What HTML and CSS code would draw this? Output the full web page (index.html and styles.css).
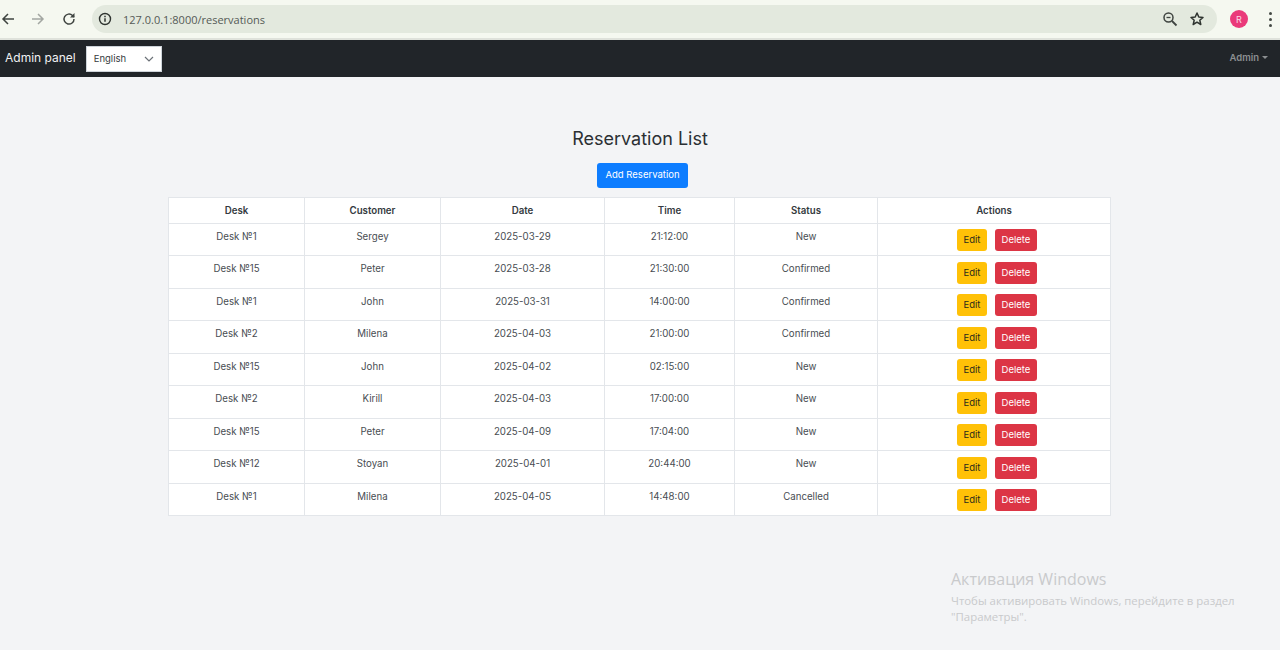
FILE: index.html
```html
<!DOCTYPE html>
<html lang="en">
<head>
<meta charset="UTF-8">
<meta name="viewport" content="width=device-width, initial-scale=1.0">
<title>Reservations</title>
<link rel="stylesheet" href="styles.css">
</head>
<body>
<div class="chrome">
    <svg class="chrome-icon" width="16" height="16" viewBox="0 0 16 16"><path d="M14 8H3M8 3L3 8l5 5" fill="none" stroke="#3f4440" stroke-width="1.5"/></svg>
    <svg class="chrome-icon forward" width="16" height="16" viewBox="0 0 16 16"><path d="M2 8h11M8 3l5 5-5 5" fill="none" stroke="#a3a7a2" stroke-width="1.5"/></svg>
    <svg class="chrome-icon reload" width="16" height="16" viewBox="0 0 16 16"><path d="M13 8a5 5 0 1 1-1.5-3.5L13 6" fill="none" stroke="#3f4440" stroke-width="1.5"/><path d="M13.500 2v4.500H9z" fill="#3f4440"/></svg>
    <div class="address">
        <svg width="16" height="16" viewBox="0 0 16 16"><circle cx="8" cy="8" r="5.500" fill="none" stroke="#2f3430" stroke-width="1.4"/><path d="M8 7.200v3.600M8 4.800v1.400" stroke="#2f3430" stroke-width="1.500"/></svg>
        <span class="url">127.0.0.1:8000/reservations</span>
        <svg class="zoom-icon" width="16" height="16" viewBox="0 0 16 16"><circle cx="6.500" cy="6.500" r="4.500" fill="none" stroke="#3f4440" stroke-width="1.500"/><path d="M10 10l4.500 4.500" stroke="#3f4440" stroke-width="1.800"/><path d="M4.500 6.500h4" stroke="#3f4440" stroke-width="1.300"/></svg>
        <svg class="star-icon" width="16" height="16" viewBox="0 0 16 16"><path d="M8 2l1.800 4 4.200.4-3.200 2.800 1 4.300L8 11.200l-3.800 2.300 1-4.300L2 6.400l4.200-.4z" fill="none" stroke="#2f3430" stroke-width="1.500" stroke-linejoin="round"/></svg>
    </div>
    <span class="avatar">R</span>
    <span class="chrome-menu"><i></i><i></i><i></i></span>
</div>

<nav class="navbar">
    <a class="brand">Admin panel</a>
    <div class="lang-select">
        <span>English</span>
        <svg width="10" height="6" viewBox="0 0 10 6"><path d="M1 1l4 4 4-4" fill="none" stroke="#6c7278" stroke-width="1.200"/></svg>
    </div>
    <a class="admin-link">Admin<i class="caret"></i></a>
</nav>

<main class="content">
    <h2>Reservation List</h2>
    <a class="btn btn-primary">Add Reservation</a>
    <table class="res-table">
        <colgroup>
            <col class="col-desk"><col class="col-customer"><col class="col-date">
            <col class="col-time"><col class="col-status"><col class="col-actions">
        </colgroup>
        <thead>
            <tr><th>Desk</th><th>Customer</th><th>Date</th><th>Time</th><th>Status</th><th>Actions</th></tr>
        </thead>
        <tbody>
            <tr><td>Desk №1</td><td>Sergey</td><td>2025-03-29</td><td>21:12:00</td><td>New</td><td class="actions"><a class="btn btn-sm btn-warning">Edit</a><a class="btn btn-sm btn-danger">Delete</a></td></tr>
            <tr><td>Desk №15</td><td>Peter</td><td>2025-03-28</td><td>21:30:00</td><td>Confirmed</td><td class="actions"><a class="btn btn-sm btn-warning">Edit</a><a class="btn btn-sm btn-danger">Delete</a></td></tr>
            <tr><td>Desk №1</td><td>John</td><td>2025-03-31</td><td>14:00:00</td><td>Confirmed</td><td class="actions"><a class="btn btn-sm btn-warning">Edit</a><a class="btn btn-sm btn-danger">Delete</a></td></tr>
            <tr><td>Desk №2</td><td>Milena</td><td>2025-04-03</td><td>21:00:00</td><td>Confirmed</td><td class="actions"><a class="btn btn-sm btn-warning">Edit</a><a class="btn btn-sm btn-danger">Delete</a></td></tr>
            <tr><td>Desk №15</td><td>John</td><td>2025-04-02</td><td>02:15:00</td><td>New</td><td class="actions"><a class="btn btn-sm btn-warning">Edit</a><a class="btn btn-sm btn-danger">Delete</a></td></tr>
            <tr><td>Desk №2</td><td>Kirill</td><td>2025-04-03</td><td>17:00:00</td><td>New</td><td class="actions"><a class="btn btn-sm btn-warning">Edit</a><a class="btn btn-sm btn-danger">Delete</a></td></tr>
            <tr><td>Desk №15</td><td>Peter</td><td>2025-04-09</td><td>17:04:00</td><td>New</td><td class="actions"><a class="btn btn-sm btn-warning">Edit</a><a class="btn btn-sm btn-danger">Delete</a></td></tr>
            <tr><td>Desk №12</td><td>Stoyan</td><td>2025-04-01</td><td>20:44:00</td><td>New</td><td class="actions"><a class="btn btn-sm btn-warning">Edit</a><a class="btn btn-sm btn-danger">Delete</a></td></tr>
            <tr><td>Desk №1</td><td>Milena</td><td>2025-04-05</td><td>14:48:00</td><td>Cancelled</td><td class="actions"><a class="btn btn-sm btn-warning">Edit</a><a class="btn btn-sm btn-danger">Delete</a></td></tr>
        </tbody>
    </table>
</main>

<div class="watermark">
    <div class="wm-title">Активация Windows</div>
    <div class="wm-text">Чтобы активировать Windows, перейдите в раздел<br>"Параметры".</div>
</div>
</body>
</html>
```

FILE: styles.css
```css
* {
    box-sizing: border-box;
}
html, body {
    height: 650px;
    overflow: hidden;
}
body {
    margin: 0;
    font-family: Inter, "Open Sans", sans-serif;
    background-color: #f3f4f6;
    color: #343a40;
    position: relative;
}

/* browser bar */
.chrome {
    height: 40px;
    display: flex;
    align-items: center;
    background-color: #f5f8f0;
    border-bottom: 2px solid #dfe2db;
}
.chrome-icon {
    flex: none;
}
.chrome-icon.forward {
    margin-left: 14px;
}
.chrome-icon.reload {
    margin-left: 15px;
}
.address {
    width: 1125px;
    height: 28px;
    margin-left: 15px;
    padding: 0 12px 0 5px;
    display: flex;
    align-items: center;
    background-color: #e3e9de;
    border-radius: 14px;
}
.url {
    margin-left: 10px;
    flex: 1;
    font-family: "Open Sans", sans-serif;
    font-size: 11px;
    color: #555a56;
}
.star-icon {
    margin-left: 11px;
}
.avatar {
    width: 18px;
    height: 18px;
    margin-left: 13px;
    display: flex;
    align-items: center;
    justify-content: center;
    border-radius: 50%;
    background-color: #ea3a7a;
    color: #fbdbe7;
    font-size: 9px;
}
.chrome-menu {
    margin-left: 21px;
    display: flex;
    flex-direction: column;
    gap: 3px;
}
.chrome-menu i {
    width: 3px;
    height: 3px;
    border-radius: 50%;
    background-color: #444944;
}

/* navbar */
.navbar {
    height: 37px;
    display: flex;
    align-items: center;
    padding: 0 12px 0 5px;
    background-color: #212529;
}
.brand {
    font-size: 12px;
    line-height: 14px;
    margin-top: -2px;
    color: #f1f2f3;
}
.lang-select {
    width: 76px;
    height: 26px;
    margin-left: 10px;
    padding: 0 7px;
    display: flex;
    align-items: center;
    justify-content: space-between;
    background-color: #fff;
    border: 1px solid #ced4da;
    font-size: 9.500px;
    color: #343a40;
}
.admin-link {
    margin-left: auto;
    margin-top: -2px;
    font-size: 9.500px;
    font-weight: 600;
    color: #8c8f91;
}
.caret {
    display: inline-block;
    margin-left: 3px;
    vertical-align: 2px;
    border-top: 3px solid #8c8f91;
    border-left: 3px solid transparent;
    border-right: 3px solid transparent;
}

/* page */
.content {
    display: flex;
    flex-direction: column;
    align-items: center;
    padding-top: 50px;
}
h2 {
    margin: 0 0 12px;
    font-size: 18px;
    font-weight: 400;
    line-height: 24px;
    color: #2b2f33;
}
.btn {
    display: inline-block;
    border-radius: 3px;
    font-size: 9.500px;
    font-weight: 400;
}
.btn-primary {
    width: 91px;
    height: 25px;
    margin-left: 5px;
    line-height: 24px;
    text-align: center;
    background-color: #0d7dff;
    color: #fff;
}
.btn-sm {
    height: 21.500px;
    line-height: 21.500px;
    text-align: center;
    vertical-align: top;
}
.btn-warning {
    width: 30px;
    background-color: #ffc107;
    color: #2b2a1c;
}
.btn-danger {
    width: 42px;
    margin-left: 8px;
    background-color: #dc3545;
    color: #fff;
}

/* table */
.res-table {
    width: 943px;
    margin: 9px 1px 0 0;
    table-layout: fixed;
    border-collapse: collapse;
    background-color: #fff;
    font-size: 9.700px;
}
.col-desk, .col-customer { width: 136px; }
.col-date { width: 164px; }
.col-time { width: 130px; }
.col-status { width: 143px; }
.res-table th, .res-table td {
    border: 1px solid #e3e6ea;
    text-align: center;
    vertical-align: top;
}
.res-table th {
    height: 26px;
    line-height: 25px;
    padding: 0;
    font-weight: 600;
    color: #343a40;
}
.res-table td {
    height: 33px;
    padding: 5px 5px 0;
    line-height: 16px;
    color: #484d52;
}
.res-table tbody tr:nth-child(odd) td {
    height: 32px;
}
.res-table td.actions {
    padding-left: 11px;
}
.res-table tbody tr:nth-child(even) td.actions {
    padding-top: 6px;
}

.watermark {
    position: absolute;
    left: 951px;
    top: 569px;
    font-family: "Open Sans", sans-serif;
    color: #c9cacc;
}
.wm-title {
    font-size: 16px;
    line-height: 21px;
}
.wm-text {
    margin-top: 3px;
    font-size: 11.400px;
    line-height: 15.500px;
}
```
